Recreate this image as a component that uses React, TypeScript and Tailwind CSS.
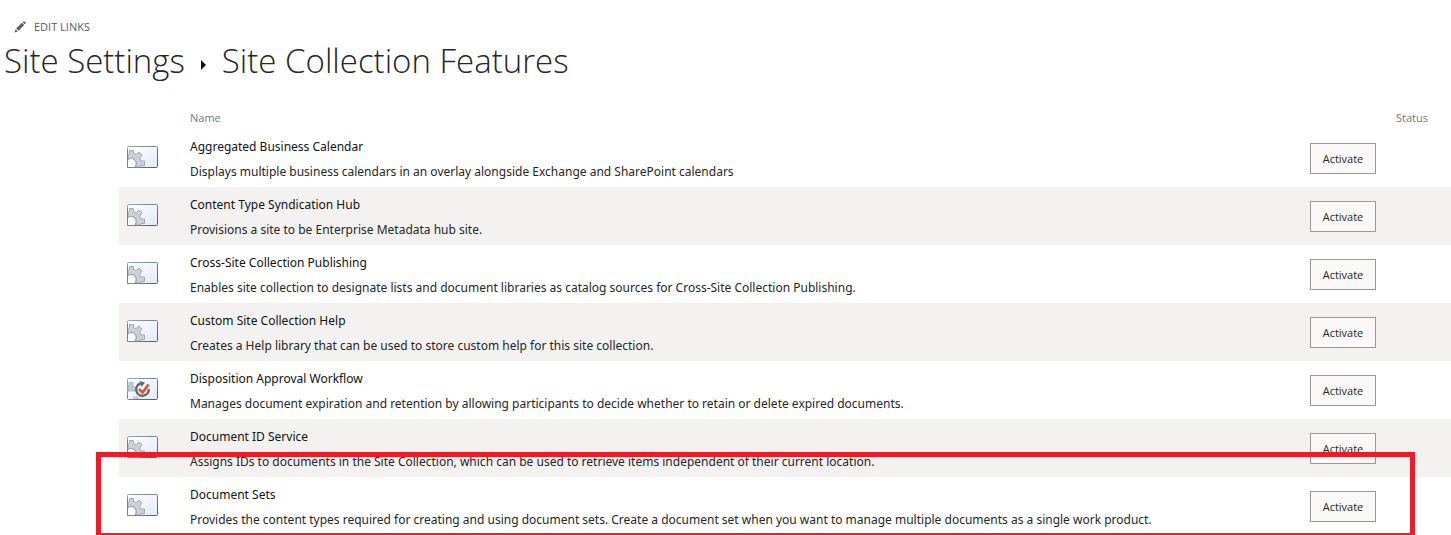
import React from "react";

type Feature = { title: string; description: string; icon: "gear" | "approval" };

const features: Feature[] = [
  {
    title: "Aggregated Business Calendar",
    description: "Displays multiple business calendars in an overlay alongside Exchange and SharePoint calendars",
    icon: "gear",
  },
  {
    title: "Content Type Syndication Hub",
    description: "Provisions a site to be Enterprise Metadata hub site.",
    icon: "gear",
  },
  {
    title: "Cross-Site Collection Publishing",
    description:
      "Enables site collection to designate lists and document libraries as catalog sources for Cross-Site Collection Publishing.",
    icon: "gear",
  },
  {
    title: "Custom Site Collection Help",
    description: "Creates a Help library that can be used to store custom help for this site collection.",
    icon: "gear",
  },
  {
    title: "Disposition Approval Workflow",
    description:
      "Manages document expiration and retention by allowing participants to decide whether to retain or delete expired documents.",
    icon: "approval",
  },
  {
    title: "Document ID Service",
    description:
      "Assigns IDs to documents in the Site Collection, which can be used to retrieve items independent of their current location.",
    icon: "gear",
  },
  {
    title: "Document Sets",
    description:
      "Provides the content types required for creating and using document sets. Create a document set when you want to manage multiple documents as a single work product.",
    icon: "gear",
  },
];

function FeatureIcon({ kind }: { kind: Feature["icon"] }) {
  return (
    <svg width="31" height="22" viewBox="0 0 31 22" className="block" aria-hidden="true">
      <defs>
        <linearGradient id="panel" x1="0" y1="0" x2="1" y2="1">
          <stop offset="0" stopColor="#ffffff" />
          <stop offset="1" stopColor="#e3e9f8" />
        </linearGradient>
        <linearGradient id="edge" x1="0" y1="0" x2="1" y2="1">
          <stop offset="0" stopColor="#93a6bd" />
          <stop offset="1" stopColor="#485c78" />
        </linearGradient>
      </defs>
      <rect x="0.5" y="0.5" width="30" height="21" rx="1" fill="url(#panel)" stroke="url(#edge)" />
      {kind === "gear" ? (
        <g>
          <path
            d="M1 8.500 L2.500 7.500 V4.500 H6.500 V7.500 L9 8.700 L12 6 L15 9 L12.700 12 L13.600 15 H17.500 V19.500 H14 L13.500 21 H8 L9 18 L8 14.500 L5 13 L1 13.500 Z"
            fill="#ccd1d8"
            stroke="#9ba4b0"
            strokeWidth="0.9"
          />
          <circle cx="4" cy="17.500" r="4.500" fill="#ffffff" />
          <path d="M1 13.700 A4.700 4.700 0 0 1 8 21" fill="none" stroke="#9ba4b0" strokeWidth="0.9" />
          <path d="M0.500 4 V21.500 H14" fill="none" stroke="#6f8299" />
        </g>
      ) : (
        <g fill="none">
          <path d="M1 8 H2 V4.500 H6 V9 H8 V13 H1 Z" fill="#c4cad2" stroke="#a3abb5" strokeWidth="0.8" />
          <path d="M5 19 L10 18 L13 21 H7 Z" fill="#c4cad2" />
          <path d="M13.500 5.500 A6.300 6.300 0 1 0 21.800 11" stroke="#62666d" strokeWidth="2.400" />
          <path d="M12.500 3 L18 4.500 L14.500 9 Z" fill="#62666d" />
          <path d="M12 11 L15.500 14.500 L21.500 6.500" stroke="#ed4d25" strokeWidth="2.600" />
        </g>
      )}
    </svg>
  );
}

export default function App() {
  return (
    <main className="relative overflow-hidden bg-white pt-[18px] font-['Open_Sans','Noto_Sans',sans-serif] text-[#262626]">
      <a href="#edit-links" className="ml-[14px] flex w-fit items-center gap-2 text-[11px] leading-[18px] text-[#5a5a5a]">
        <svg width="12" height="12" viewBox="0 0 12 12" fill="#5a5a5a" aria-hidden="true">
          <path d="M0.500 11.500 L1.600 8.200 L3.800 10.400 Z" />
          <path d="M2.200 7.500 L8 1.800 L10.200 4 L4.500 9.800 Z" />
          <path d="M8.700 1.200 L9.500 0.400 Q10 0 10.600 0.500 L11.500 1.400 Q12 2 11.600 2.500 L10.800 3.300 Z" />
        </svg>
        EDIT LINKS
      </a>
      <h1 className="ml-1 flex h-[50px] items-center text-[33px] leading-[50px] font-light whitespace-nowrap">
        <a href="#site-settings">Site Settings</a>
        <svg width="5" height="10" viewBox="0 0 5 10" className="mt-2 mr-4 ml-4" aria-hidden="true">
          <path d="M0 0 L5 5 L0 10 Z" fill="#111111" />
        </svg>
        <span>Site Collection Features</span>
      </h1>

      <div className="relative mt-[21px] ml-[119px]">
        <table className="w-full table-fixed border-collapse text-left">
          <colgroup>
            <col className="w-[71px]" />
            <col />
            <col className="w-[77px]" />
            <col className="w-[64px]" />
          </colgroup>
          <thead>
            <tr className="h-[22px] text-[11px] leading-[22px] text-[#777777]">
              <th aria-label="Icon" />
              <th className="font-normal">Name</th>
              <th aria-label="Action" />
              <th className="pl-[9px] font-normal">Status</th>
            </tr>
          </thead>
          <tbody className="font-['Noto_Sans','Open_Sans',sans-serif]">
            {features.map((feature) => (
              <tr key={feature.title} className="h-[58px] align-top even:bg-[#f3f2f1]">
                <td className="pt-[17px] pl-2">
                  <FeatureIcon kind={feature.icon} />
                </td>
                <td className="pt-[5px] text-[12px] leading-[25px] whitespace-nowrap">
                  <h2 className="text-[#111111]">{feature.title}</h2>
                  <p>{feature.description}</p>
                </td>
                <td className="pt-[14px]">
                  <button
                    type="button"
                    aria-label={`Activate ${feature.title}`}
                    className="block h-[31px] w-[66px] border border-[#999999] bg-[#faf9f8] font-['Open_Sans','Noto_Sans',sans-serif] text-[11px] leading-[29px]"
                  >
                    Activate
                  </button>
                </td>
                <td />
              </tr>
            ))}
          </tbody>
        </table>
        <div className="pointer-events-none absolute right-9 -bottom-[3px] -left-[23px] h-[86px] border-5 border-[#ed1c24]" />
      </div>
    </main>
  );
}
